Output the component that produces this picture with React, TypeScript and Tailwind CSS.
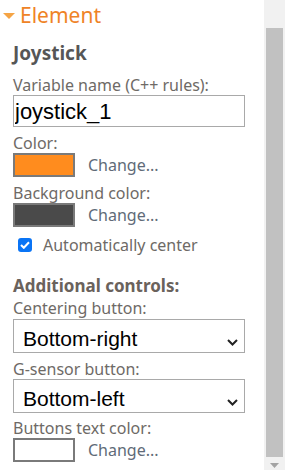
const labelCls = "block text-[16px] leading-[20px] text-[#6e6a66]";
const changeCls = "text-[16px] leading-[20px] text-[#5f6b78]";

const Swatch: React.FC<{ color: string; className?: string }> = ({ color, className }) => (
  <div className={"flex items-center gap-[13px] " + (className ?? "")}>
    <div className={"w-[62px] h-[24px] border-2 border-[#7a7a7a] " + color} />
    <span className={changeCls}>Change...</span>
  </div>
);

const Select: React.FC<{ value: string; className?: string }> = ({ value, className }) => (
  <div className={"relative w-[232px] " + (className ?? "")}>
    <select
      defaultValue={value}
      className="appearance-none block w-full h-[34px] border border-[#a9a9a9] bg-white pl-[9px] pt-[3px] pb-0 text-[21px] text-black outline-none"
      style={{ fontFamily: '"Liberation Sans", Arial, sans-serif' }}
    >
      <option>Bottom-right</option>
      <option>Bottom-left</option>
      <option>Top-right</option>
      <option>Top-left</option>
    </select>
    <svg
      viewBox="0 0 11 7"
      className="absolute right-[7px] top-[20px] w-[11px] h-[7px] pointer-events-none"
    >
      <path d="M1 1l4.5 4.5L10 1" fill="none" stroke="#222" strokeWidth="2" />
    </svg>
  </div>
);

const App: React.FC = () => {
  return (
    <div
      className="flex w-[285px] h-[470px] overflow-hidden bg-white"
      style={{ fontFamily: '"Noto Sans", "DejaVu Sans", sans-serif' }}
    >
      <div className="flex-1 flex flex-col">
        <div className="flex items-center pt-[1px] h-[29px] pl-[3px]">
          <svg viewBox="0 0 12 6" className="w-[12px] h-[6px] mt-[2px]">
            <path d="M0 0h12L6 6z" fill="#f5a445" />
          </svg>
          <span className="ml-[5px] text-[21px] leading-[28px] text-[#ef8326]">Element</span>
        </div>

        <div className="pl-[13px] flex flex-col">
          <h2 className="mt-[14px] text-[19px] leading-[20px] font-bold text-[#565656]">Joystick</h2>

          <label className={labelCls + " mt-[12px]"}>Variable name (C++ rules):</label>
          <input
            defaultValue="joystick_1"
            className="block w-[232px] h-[32px] border border-[#a9a9a9] px-[1px] text-[22px] text-black outline-none"
            style={{ fontFamily: '"Liberation Sans", Arial, sans-serif' }}
          />

          <span className={labelCls + " mt-[6px]"}>Color:</span>
          <Swatch color="bg-[#ff8c1e]" />

          <span className={labelCls + " mt-[6px]"}>Background color:</span>
          <Swatch color="bg-[#4a4a4a]" />

          <div className="mt-[8px] flex items-center h-[20px] pl-[5px]">
            <div className="w-[14px] h-[14px] rounded-[3px] bg-[#0a74f5] flex items-center justify-center">
              <svg viewBox="0 0 10 8" className="w-[10px] h-[8px]">
                <path d="M1 4l2.8 2.8L9 1.2" fill="none" stroke="#fff" strokeWidth="2" />
              </svg>
            </div>
            <span className="ml-[11px] text-[16px] leading-[20px] text-[#6e6a66]">Automatically center</span>
          </div>

          <h3 className="mt-[21px] text-[17px] leading-[20px] font-bold text-[#6a625c]">Additional controls:</h3>

          <span className={labelCls + " mt-[2px]"}>Centering button:</span>
          <Select value="Bottom-right" className="mt-[1px]" />

          <span className={labelCls + " mt-[6px]"}>G-sensor button:</span>
          <Select value="Bottom-left" />

          <span className={labelCls + " mt-[5px]"}>Buttons text color:</span>
          <Swatch color="bg-white" />
        </div>
      </div>

      <div className="w-[21px] h-full bg-[#f1f1f1] flex flex-col items-center">
        <div className="h-[28px]" />
        <div className="w-[17px] h-[429px] bg-[#c1c1c1]" />
        <svg viewBox="0 0 9 5" className="mt-[6px] w-[9px] h-[5px]">
          <path d="M0 0h9L4.5 5z" fill="#a3a3a3" />
        </svg>
      </div>
    </div>
  );
};

export default App;
